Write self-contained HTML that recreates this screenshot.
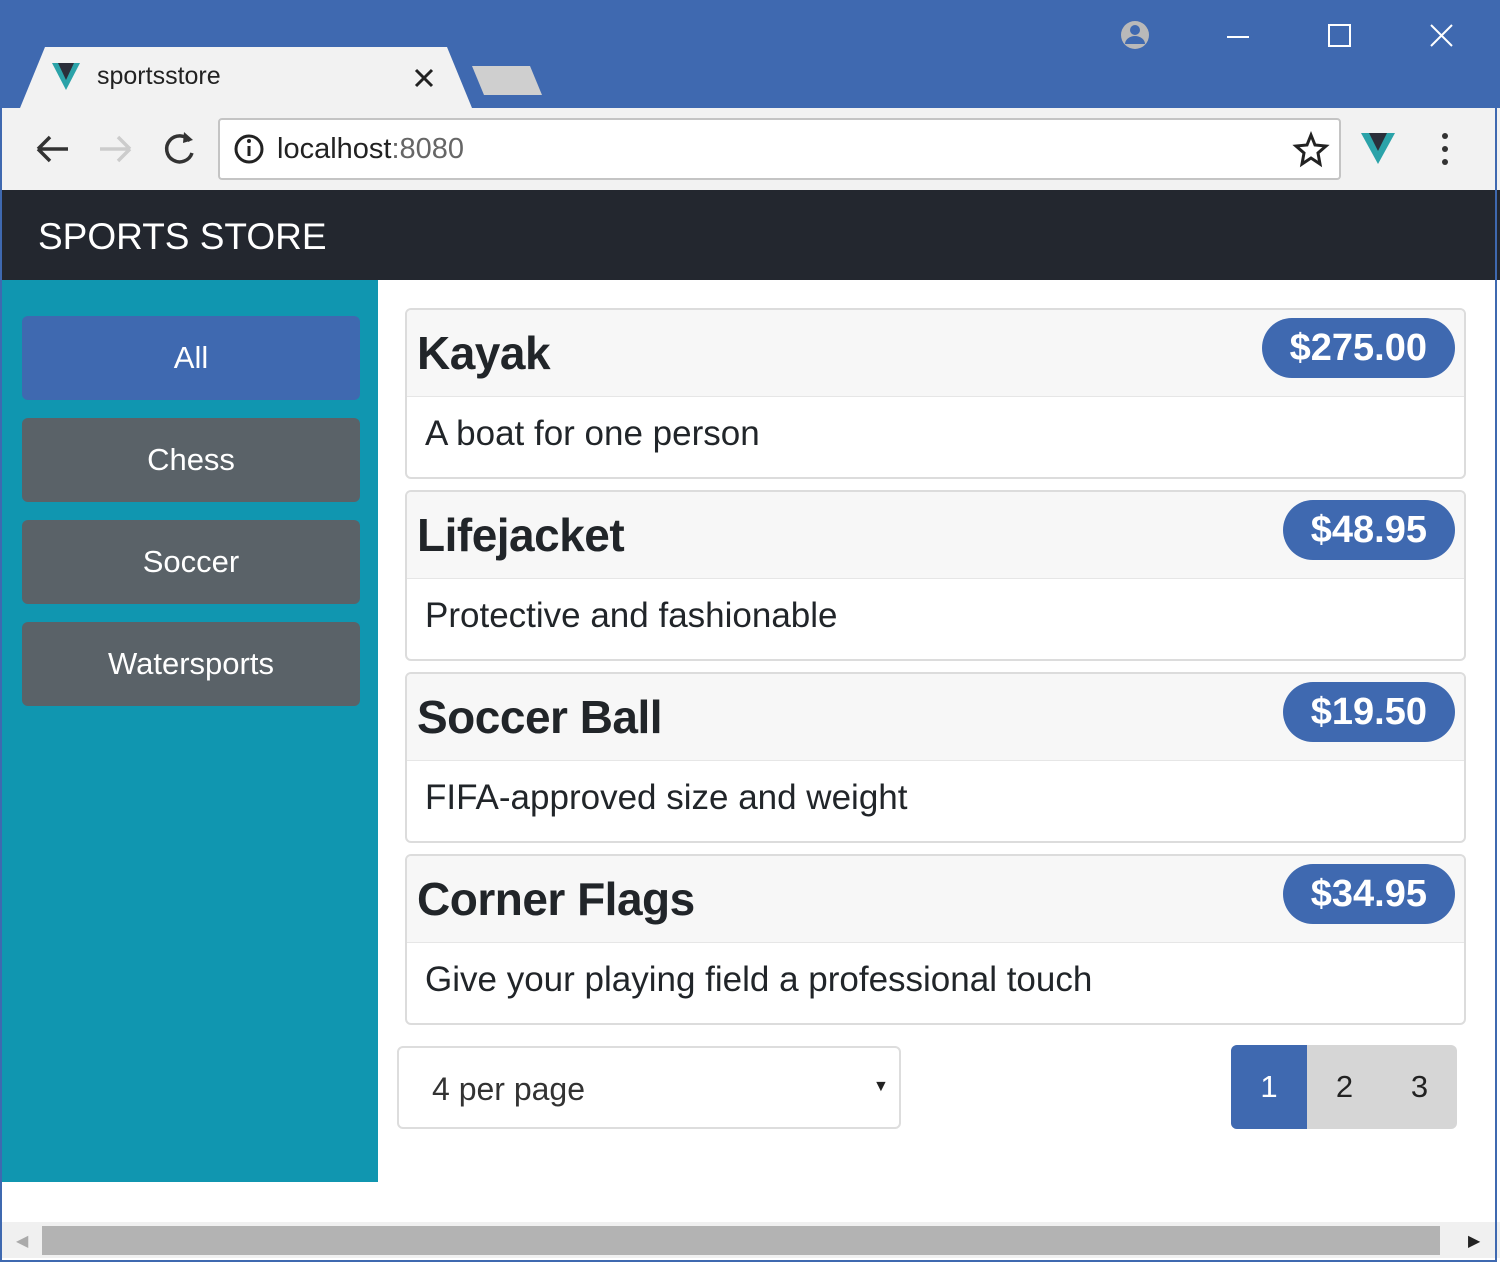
<!DOCTYPE html>
<html><head><meta charset="utf-8"><style>
*{box-sizing:border-box;margin:0;padding:0}
body{width:1500px;height:1267px;background:#fff;font-family:"Liberation Sans",sans-serif;position:relative;overflow:hidden}
.abs{position:absolute}
.frame{left:0;top:0;width:1497px;height:1262px;border:2px solid #3f69b0;border-top:none}
.card{position:absolute;left:405px;width:1061px;height:171px;border:2px solid #dcdcdc;border-radius:6px;overflow:hidden;background:#fff}
.ch{height:87px;background:#f7f7f7;border-bottom:1px solid #e6e6e6;position:relative}
.ch h2{position:absolute;left:10px;top:16px;font-size:46px;font-weight:bold;color:#212529;letter-spacing:-0.5px}
.badge{position:absolute;right:9px;top:8px;height:60px;border-radius:30px;background:#3f69b0;color:#fff;font-size:38px;font-weight:bold;line-height:60px;padding:0 28px}
.cb{position:absolute;left:18px;top:104px;font-size:35px;color:#212529}
.btn{position:absolute;left:22px;width:338px;height:84px;border-radius:6px;color:#fff;font-size:31px;text-align:center;line-height:84px;background:#5a6268}
</style></head><body>
<div class="abs" style="left:0;top:0;width:1500px;height:108px;background:#3f69b0"></div>
<svg class="abs" style="left:0;top:0" width="1500" height="108">
<polygon points="20,108 45,47 447,47 472,108" fill="#f2f2f2"/>
<polygon points="472,66 530,66 542,95 484,95" fill="#cfcfcf"/>
<polygon points="52,63 80,63 66,90" fill="#2ba3a9"/><polygon points="58,63 74,63 66,80" fill="#2b2f3a"/>
<path d="M416 70l16 16M432 70l-16 16" stroke="#222" stroke-width="3"/>
<circle cx="1135" cy="35" r="14" fill="#b9b9b9"/><circle cx="1135" cy="30" r="5" fill="#3f69b0"/><path d="M1125 44a10 8 0 0 1 20 0" fill="#3f69b0"/>
<path d="M1227 37h22" stroke="#fff" stroke-width="2"/>
<rect x="1329" y="25" width="21" height="21" fill="none" stroke="#fff" stroke-width="2"/>
<path d="M1431 25l21 21M1452 25l-21 21" stroke="#fff" stroke-width="2"/>
</svg>
<div class="abs" style="left:97px;top:62px;font-size:25px;color:#222">sportsstore</div>
<div class="abs" style="left:0;top:108px;width:1500px;height:82px;background:#f2f2f2"></div>
<div class="abs" style="left:218px;top:118px;width:1123px;height:62px;background:#fff;border:2px solid #c4c4c4;border-radius:4px"></div>
<svg class="abs" style="left:0;top:108px" width="1500" height="82">
<path d="M38 41h30M38 41l12-12M38 41l12 12" stroke="#333" stroke-width="3.5" fill="none"/>
<path d="M100 41h30M130 41l-12-12M130 41l-12 12" stroke="#ccc" stroke-width="3.5" fill="none"/>
<path d="M190 33a13 13 0 1 0 2 12" stroke="#333" stroke-width="3.5" fill="none"/><path d="M184 24l9 8-10 3z" fill="#333"/>
<circle cx="249" cy="41" r="13" stroke="#222" stroke-width="3" fill="none"/><path d="M249 38v10" stroke="#222" stroke-width="3"/><circle cx="249" cy="33" r="2" fill="#222"/>
<polygon points="1311,27 1315,37 1326,38 1318,45 1320,56 1311,50 1302,56 1304,45 1296,38 1307,37" fill="none" stroke="#222" stroke-width="3"/>
<polygon points="1361,25 1395,25 1378,56" fill="#2ba3a9"/><polygon points="1369,25 1387,25 1378,43" fill="#2b2f3a"/>
<circle cx="1445" cy="28" r="3" fill="#333"/><circle cx="1445" cy="41" r="3" fill="#333"/><circle cx="1445" cy="54" r="3" fill="#333"/>
</svg>
<div class="abs" style="left:277px;top:133px;font-size:29px;color:#222">localhost<span style="color:#666">:8080</span></div>
<div class="abs" style="left:0;top:190px;width:1500px;height:90px;background:#23272f"></div>
<div class="abs" style="left:38px;top:216px;font-size:37px;color:#fff">SPORTS STORE</div>
<div class="abs" style="left:0;top:280px;width:378px;height:902px;background:#1096b0"></div>
<div class="btn" style="top:316px;background:#3f69b0">All</div>
<div class="btn" style="top:418px">Chess</div>
<div class="btn" style="top:520px">Soccer</div>
<div class="btn" style="top:622px">Watersports</div>

<div class="card" style="top:308px"><div class="ch"><h2>Kayak</h2><span class="badge">$275.00</span></div><div class="cb">A boat for one person</div></div>
<div class="card" style="top:490px"><div class="ch"><h2>Lifejacket</h2><span class="badge">$48.95</span></div><div class="cb">Protective and fashionable</div></div>
<div class="card" style="top:672px"><div class="ch"><h2>Soccer Ball</h2><span class="badge">$19.50</span></div><div class="cb">FIFA-approved size and weight</div></div>
<div class="card" style="top:854px"><div class="ch"><h2>Corner Flags</h2><span class="badge">$34.95</span></div><div class="cb">Give your playing field a professional touch</div></div>

<div class="abs" style="left:397px;top:1046px;width:504px;height:83px;border:2px solid #ddd;border-radius:6px;background:#fff"></div>
<div class="abs" style="left:432px;top:1071px;font-size:32px;color:#333">4 per page</div>
<div class="abs" style="left:873px;top:1078px;font-size:16px;color:#222">▼</div>
<div class="abs" style="left:1231px;top:1045px;width:226px;height:84px;background:#d6d6d6;border-radius:6px;overflow:hidden">
<div style="position:absolute;left:0;top:0;width:76px;height:84px;background:#3f69b0;color:#fff;font-size:31px;line-height:84px;text-align:center">1</div>
<div style="position:absolute;left:76px;top:0;width:75px;line-height:84px;text-align:center;font-size:31px;color:#222">2</div>
<div style="position:absolute;left:151px;top:0;width:75px;line-height:84px;text-align:center;font-size:31px;color:#222">3</div>
</div>
<div class="abs" style="left:0;top:1222px;width:1500px;height:36px;background:#f0f0f0"></div>
<div class="abs" style="left:42px;top:1226px;width:1398px;height:29px;background:#b3b3b3"></div>
<div class="abs" style="left:16px;top:1231px;font-size:16px;color:#aaa">◀</div>
<div class="abs" style="left:1468px;top:1231px;font-size:16px;color:#222">▶</div>
<div class="abs frame"></div>
</body></html>
